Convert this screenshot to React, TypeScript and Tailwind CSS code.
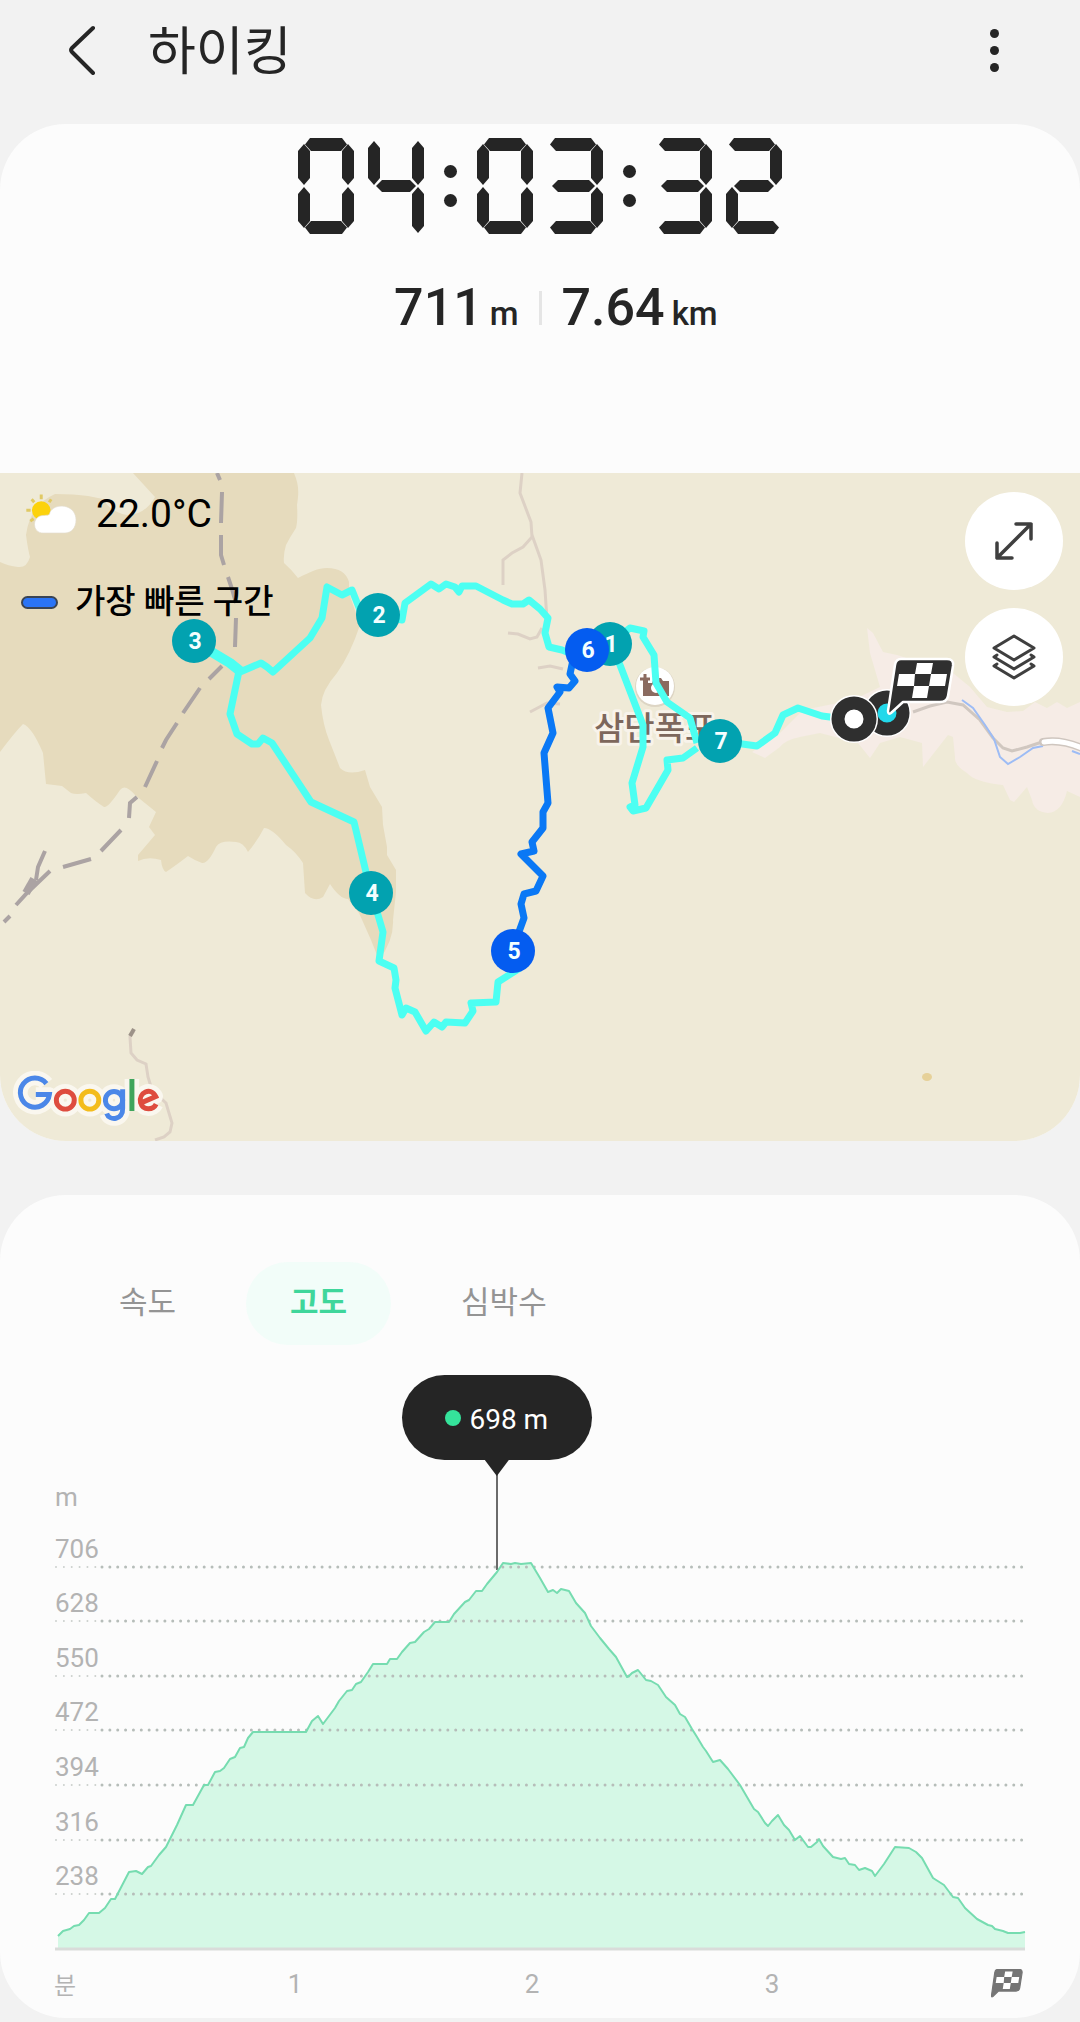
import { useState } from "react";

/* ---------- Seven-segment timer ---------- */

const H_SHAPE = "[clip-path:polygon(0_50%,6px_0,calc(100%-6px)_0,100%_50%,calc(100%-6px)_100%,6px_100%)]";
const BOTTOM_SHAPE = "[clip-path:polygon(0_50%,6px_0,calc(100%-6px)_0,100%_50%,calc(100%-5px)_100%,5px_100%)]";
const TOP_SHAPE = "[clip-path:polygon(0_50%,5px_0,calc(100%-5px)_0,100%_50%,calc(100%-6px)_100%,6px_100%)]";
const V_SHAPE = "[clip-path:polygon(50%_0,100%_7px,100%_calc(100%-7px),50%_100%,0_calc(100%-7px),0_7px)]";

const SEGMENTS: Record<string, string> = {
  a: `left-[7px] right-[7px] top-0 h-[13px] ${TOP_SHAPE}`,
  aOpen: `left-[3px] right-[7px] top-0 h-[13px] ${TOP_SHAPE}`,
  b: `right-0 top-[6px] w-[12px] h-[41px] ${V_SHAPE}`,
  bTall: `right-0 top-[3px] w-[12px] h-[44px] ${V_SHAPE}`,
  c: `right-0 top-[49px] w-[12px] h-[41px] ${V_SHAPE}`,
  cTall: `right-0 top-[49px] w-[12px] h-[46px] ${V_SHAPE}`,
  d: `left-[7px] right-[7px] bottom-0 h-[13px] ${BOTTOM_SHAPE}`,
  dOpen: `left-[3px] right-[7px] bottom-0 h-[13px] ${BOTTOM_SHAPE}`,
  dWide: `left-[7px] right-[3px] bottom-0 h-[13px] ${BOTTOM_SHAPE}`,
  e: `left-0 top-[49px] w-[12px] h-[41px] ${V_SHAPE}`,
  f: `left-0 top-[6px] w-[12px] h-[41px] ${V_SHAPE}`,
  fTall: `left-0 top-[3px] w-[12px] h-[44px] ${V_SHAPE}`,
  g: `left-[8px] right-[8px] top-[42px] h-[12px] ${H_SHAPE}`,
  gOpen: `left-[5px] right-[8px] top-[42px] h-[12px] ${H_SHAPE}`,
};

const DIGITS: Record<string, string[]> = {
  "0": ["a", "b", "c", "d", "e", "f"],
  "2": ["aOpen", "b", "g", "e", "dWide"],
  "3": ["aOpen", "b", "gOpen", "c", "dOpen"],
  "4": ["fTall", "bTall", "g", "cTall"],
};

function Digit({ value }: { value: string }) {
  return (
    <span className="relative block h-24 w-14">
      {DIGITS[value].map((name) => (
        <span key={name} className={`absolute bg-[#252525] ${SEGMENTS[name]}`} />
      ))}
    </span>
  );
}

function Colon() {
  return (
    <span className="mx-5 flex flex-col gap-4">
      <span className="size-[13px] rounded-full bg-[#252525]" />
      <span className="size-[13px] rounded-full bg-[#252525]" />
    </span>
  );
}

function Timer({ value }: { value: string }) {
  return (
    <div className="flex items-center justify-center" role="timer" aria-label={value}>
      {value.split(":").map((pair, i) => (
        <div key={i} className="flex items-center">
          {i > 0 && <Colon />}
          <div className="flex gap-[14px]">
            <Digit value={pair[0]} />
            <Digit value={pair[1]} />
          </div>
        </div>
      ))}
    </div>
  );
}

/* ---------- Flag ---------- */

function Flag({ fill, outline }: { fill: string; outline: string }) {
  return (
    <g>
      <path
        d="M14 1H60Q67 1 66 8L61 38Q60 44 53 44H16L4 55Q1 57 1 53L8 7Q9 1 14 1Z"
        fill={fill}
        stroke={outline}
        strokeWidth="2.5"
        strokeLinejoin="round"
      />
      <path
        d="M30 5H46L44 16H60L58 28H42L40 40H25L27 28H10L12 16H28ZM28 16L27 28H42L44 16Z"
        fill="#fff"
        fillRule="evenodd"
      />
    </g>
  );
}

/* ---------- Map ---------- */

const MARKERS = [
  { n: 1, x: 610, y: 644, fast: false },
  { n: 2, x: 378, y: 615, fast: false },
  { n: 3, x: 194, y: 641, fast: false },
  { n: 4, x: 371, y: 893, fast: false },
  { n: 5, x: 513, y: 951, fast: true },
  { n: 6, x: 587, y: 650, fast: true },
  { n: 7, x: 720, y: 741, fast: false },
];

function TrailMap() {
  return (
    <svg
      className="absolute inset-0 size-full"
      viewBox="0 473 1080 668"
      preserveAspectRatio="xMidYMid slice"
      role="img"
      aria-label="하이킹 경로 지도"
    >
      <rect x="-500" y="0" width="2080" height="2000" fill="#efead7" />
      <path
        d="M0 473H294C299 485 299 492 297 505Q298 520 296 528Q290 537 286 545Q283 555 284 563Q292 570 298 578C310 572 318 568 327 568Q345 568 349 582V593L360 625Q350 655 337 673Q322 690 321 705Q323 725 329 740Q335 755 340 768Q348 776 365 770L370 787L382 807L383 825L387 847V855L396 870V892L393 920Q394 940 379 960L371 940L359 913L348 899Q340 899 330 884L323 897Q314 903 305 893L303 863Q296 852 286 845Q272 828 264 828Q258 840 248 852Q243 842 236 842Q220 840 216 847Q208 864 202 863Q194 860 188 856Q175 866 166 872Q162 870 161 860Q148 856 138 861V855L155 835L149 827L156 812L135 795Q125 783 120 790Q108 808 104 807Q96 802 86 793Q76 795 71 793L62 786L46 784L43 753Q32 727 23 724Q15 732 0 752Z"
        fill="#e6dbbd"
      />
      <path d="M0 473H133L155 497Q145 515 127 515Q110 512 103 499L88 496Q75 494 55 494Q30 505 26 535Q28 550 30 557Q27 568 18 567Q8 566 0 562Z" fill="#efead7" />
      <path
        d="M867 628L873 633L883 652L897 655L953 673L970 687L987 707L1007 712L1023 711L1035 702L1047 708L1057 702L1067 708L1080 702V797L1067 791Q1062 812 1048 813Q1034 812 1032 800L1027 787L1014 802L1010 800L1003 785Q975 782 967 773Q954 765 955 757L953 737L948 735L923 767L922 743L900 737L880 743L870 758L858 743L820 733L800 737Q785 740 780 747L765 758L752 752L780 733L803 710L853 700L880 687L870 653Z"
        fill="#f6ece6"
      />
      <ellipse cx="927" cy="1077" rx="5" ry="4" fill="#e6d199" />

      <g fill="none" stroke="#aba3a3" strokeWidth="4">
        <path d="M217 473L220 480M222 492L221 523M221 535V555L224 565M228 577L232 589L236 603M236 618L235 647M222 666L209 679M200 688L183 713M177 723L166 740L162 748M157 761L145 787M137 797L130 803L129 818M121 830L101 851M91 859L63 867M50 871L27 893L16 905M45 851L38 867L36 880M10 916L4 922" />
        <path d="M34 879L26 893" strokeWidth="8" />
      </g>
      <g fill="none" stroke="#ddd1c5" strokeWidth="3">
        <path d="M134 1031L130 1037L131 1053L137 1060L146 1064L148 1077L152 1090L166 1103L172 1123L170 1132L164 1137L155 1140" />
        <path d="M522 473L520 493L531 522L532 537L523 547L512 553L503 560V585M532 535L541 560L545 590L547 620M508 633L518 634L530 639L537 637L542 628M538 668L550 666L563 669M530 712L547 703L560 704" />
      </g>
      <path d="M134 1029L130 1036" stroke="#9c9288" strokeWidth="4" />
      <path d="M913 712L930 706L947 702L963 705L980 720L993 738L1003 748L1012 751L1027 747L1042 742" fill="none" stroke="#d0c7c0" strokeWidth="3" />
      <path d="M962 700L973 708L985 725L994 739L1000 757L1008 764L1020 757L1033 748L1043 746M1072 751L1080 754" fill="none" stroke="#9dbcf5" strokeWidth="2" />
      <path d="M1043 742Q1062 739 1084 749" fill="none" stroke="#cfc6bf" strokeWidth="8" strokeLinecap="round" />
      <path d="M1044 742Q1062 739 1084 749" fill="none" stroke="#fff" strokeWidth="5" strokeLinecap="round" />

      <circle cx="655" cy="687" r="20" fill="#ddd5c4" />
      <circle cx="655" cy="686" r="19" fill="#fff" />
      <path d="M643 680H648V683H652L654 678H661L663 681H669V696H643ZM656 683A5 5 0 1 0 656 693A5 5 0 1 0 656 683Z" fill="#8b6b60" fillRule="evenodd" />
      <path d="M645 674V683M640 679H650" stroke="#8b6b60" strokeWidth="3" />
      <text
        x="594"
        y="740"
        fontSize="33"
        className="font-medium"
        fill="#7d675c"
        stroke="#f8f3ea"
        strokeWidth="6"
        strokeLinejoin="round"
        paintOrder="stroke"
      >
        삼단폭포
      </text>

      <g fill="none" stroke="#4cfff2" strokeWidth="7" strokeLinejoin="round">
        <path d="M853 719L830 717L822 716L798 708L783 715L775 733L757 746L720 741" />
        <path d="M697 743L690 718L667 702L656 683L654 655L643 637L644 631L630 628L610 644L620 665L643 725L643 747L632 783L635 805L630 807L633 811L646 808L668 770L667 760L683 758L697 748" />
        <path d="M587 660L562 650L549 647L545 633L548 618L540 609L529 600L523 604H512L503 600L476 586H462L459 592L455 587L446 584L439 589L431 584L405 603L402 620L378 615L360 610L352 590L342 595L327 587L322 618L310 638L273 672L267 667L261 663L240 672" />
        <path d="M240 671L230 663L200 645" strokeWidth="10" />
        <path d="M239 671L230 714L237 734L252 744H258L263 738L272 743L311 802L354 822L371 893L378 915L383 932L379 961L394 968L396 980L395 988L402 1015L406 1008L415 1012L426 1031L434 1022L442 1027L446 1022L465 1023L473 1011L471 1003L496 1002L498 982L520 968" />
      </g>
      <path
        d="M516 940L524 918L521 904L524 894L536 891L543 876L521 854L534 851L532 842L543 828L543 812L548 803L544 753L553 733L548 708L560 692L557 687L569 688L575 681L570 674L573 660"
        fill="none"
        stroke="#0a78f5"
        strokeWidth="7"
        strokeLinejoin="round"
      />

      {MARKERS.map((m) => (
        <g key={m.n}>
          <circle cx={m.x} cy={m.y} r="22" fill={m.fast ? "#045cf0" : "#02a2b0"} />
          <text x={m.x + 1} y={m.y + 8} fontSize="23" className="font-bold" textAnchor="middle" fill="#f4feff">
            {m.n}
          </text>
        </g>
      ))}

      <circle cx="887" cy="713" r="24" fill="#fff" />
      <circle cx="887" cy="713" r="16" fill="#22d8ea" stroke="#2f2f2f" strokeWidth="13" />
      <circle cx="854" cy="719" r="24" fill="#fff" />
      <circle cx="854" cy="719" r="16" fill="#fff" stroke="#2f2f2f" strokeWidth="13" />
      <g transform="translate(887 658)">
        <Flag fill="#2f2f2f" outline="#fff" />
      </g>
    </svg>
  );
}

function WeatherIcon() {
  return (
    <svg className="h-[42px] w-[53px]" viewBox="75 100 160 125" aria-hidden="true">
      <path d="M124 104V118M95 118L103 127M154 118L148 127M79 151H92M91 184L101 177" stroke="#e0c964" strokeWidth="9" />
      <circle cx="124" cy="152" r="28" fill="#fcd20c" />
      <path
        d="M130 220C95 220 95 168 130 167C142 166 146 166 149 163C155 128 228 128 229 180C229 205 215 220 195 220Z"
        fill="#fff"
        stroke="#e2dccd"
        strokeWidth="2"
      />
    </svg>
  );
}

function GoogleLogo() {
  const shapes = (
    <>
      <path d="M140 70A44 44 0 1 0 149 103H108" className="stroke-[#4b87e8]" />
      <circle cx="197" cy="120" r="27" className="stroke-[#de4c3e]" />
      <circle cx="271" cy="120" r="27" className="stroke-[#f3bc1c]" />
      <circle cx="344" cy="120" r="26" className="stroke-[#4b87e8]" />
      <path d="M370 87V145C372 180 330 184 322 160" className="stroke-[#4b87e8]" />
      <path d="M398 56V153" className="stroke-[#3fa55c]" />
      <path d="M424 129L470 109C455 78 417 98 424 127C432 154 463 149 471 132" className="stroke-[#de4c3e]" />
    </>
  );
  return (
    <svg className="h-[57px] w-[153px]" viewBox="40 32 460 172" fill="none" aria-hidden="true">
      <g strokeWidth="44" strokeLinejoin="round" className="[&>*]:stroke-[#faf7ef]">
        {shapes}
      </g>
      <g strokeWidth="15">{shapes}</g>
    </svg>
  );
}

/* ---------- Elevation chart ---------- */

const PROFILE =
  "58,1936 63,1931 70,1929 74,1926 79,1925 84,1920 89,1913 99,1913 105,1908 111,1899 115,1899 129,1872 136,1871 142,1874 148,1867 151,1866 159,1855 166,1847 177,1825 186,1805 193,1805 204,1785 208,1785 215,1772 220,1771 224,1768 230,1759 235,1757 240,1748 244,1747 248,1738 253,1732 306,1732 312,1721 318,1716 323,1724 329,1716 335,1708 339,1701 347,1691 352,1690 356,1684 361,1682 368,1672 373,1664 387,1664 390,1659 397,1659 402,1652 410,1643 415,1642 424,1632 429,1629 435,1622 449,1622 454,1614 465,1602 469,1600 476,1591 482,1591 487,1584 497,1572 503,1563 511,1564 515,1563 521,1564 531,1563 540,1578 548,1592 553,1590 557,1593 561,1589 569,1591 576,1603 585,1613 591,1626 600,1638 609,1649 616,1657 627,1677 629,1676 632,1673 638,1670 646,1680 651,1681 658,1685 666,1697 675,1705 680,1714 685,1717 692,1729 697,1737 703,1747 706,1751 713,1762 720,1760 728,1769 740,1785 747,1797 754,1809 758,1812 765,1823 768,1826 772,1821 778,1815 784,1825 789,1830 795,1840 800,1836 808,1847 811,1847 817,1842 819,1839 823,1846 833,1857 841,1859 845,1858 849,1864 855,1865 859,1870 865,1868 872,1871 875,1876 884,1864 895,1847 909,1848 916,1852 922,1858 933,1878 944,1885 953,1897 958,1898 965,1908 977,1919 988,1925 992,1926 995,1929 1003,1931 1008,1933 1020,1933 1025,1932";

const LEVELS = [
  { label: "706", y: 1567 },
  { label: "628", y: 1621 },
  { label: "550", y: 1676 },
  { label: "472", y: 1730 },
  { label: "394", y: 1785 },
  { label: "316", y: 1840 },
  { label: "238", y: 1894 },
];

function ElevationChart() {
  return (
    <svg className="block h-auto w-full" viewBox="0 1345 1080 673" role="img" aria-label="고도 그래프">
      <polygon points={`58,1949 ${PROFILE} 1025,1949`} fill="#d5f8e6" />
      {LEVELS.map((l) => (
        <g key={l.label} fill="none" stroke="#b6bdb9" strokeLinecap="round">
          <path d={`M56 ${l.y}H98`} strokeWidth="2" strokeDasharray="0 7.86" opacity="0.7" />
          <path d={`M102 ${l.y}H1025`} strokeWidth="3" strokeDasharray="0 7.86" />
        </g>
      ))}
      <path d="M497 1470V1570" stroke="#6b6b6b" strokeWidth="2" />
      <polyline points={PROFILE} fill="none" stroke="#76dcb0" strokeWidth="2" strokeLinejoin="round" />
      <path d="M55 1949H1025" stroke="#d9dcda" strokeWidth="3" />
      <g fontSize="26" fill="#b3b3b3">
        <text x="55" y="1506">m</text>
        {LEVELS.map((l) => (
          <text key={l.label} x="55" y={l.y - 9}>
            {l.label}
          </text>
        ))}
        <text x="54" y="1994" fontSize="24">분</text>
        <text x="295" y="1993" textAnchor="middle">1</text>
        <text x="532" y="1993" textAnchor="middle">2</text>
        <text x="772" y="1993" textAnchor="middle">3</text>
      </g>
      <svg x="991" y="1969" width="32" height="29" viewBox="0 0 68 58" preserveAspectRatio="none">
        <Flag fill="#757575" outline="#757575" />
      </svg>
    </svg>
  );
}

const TABS = ["속도", "고도", "심박수"];

export default function App() {
  const [tab, setTab] = useState("고도");
  return (
    <div className="min-h-screen bg-[#f2f2f2] pb-1 font-[Roboto,'Noto_Sans_CJK_KR',sans-serif] text-[#252525]">
      <header className="flex h-[124px] items-center pb-6 pl-[58px] pr-[62px]">
        <button type="button" aria-label="뒤로" className="flex size-12 items-center justify-center">
          <svg className="h-[50px] w-[28px]" viewBox="0 0 28 50" fill="none" stroke="currentColor" strokeWidth="4" strokeLinecap="round" strokeLinejoin="round">
            <path d="M25 3L4 23Q2 25 4 27L25 48" />
          </svg>
        </button>
        <h1 className="ml-[42px] flex-1 pt-1.5 text-[52px] leading-[60px]">하이킹</h1>
        <button type="button" aria-label="더보기" className="flex size-12 flex-col items-center justify-center gap-2">
          <span className="size-[9px] shrink-0 rounded-full bg-[#252525]" />
          <span className="size-[9px] shrink-0 rounded-full bg-[#252525]" />
          <span className="size-[9px] shrink-0 rounded-full bg-[#252525]" />
        </button>
      </header>

      <main>
        <section className="overflow-hidden rounded-[66px] bg-[#fcfcfc] pt-[14px]">
          <Timer value="04:03:32" />
          <div className="mb-[135px] mt-11 grid grid-cols-[1fr_auto_1fr] items-center gap-5 font-medium">
            <p className="flex h-[60px] items-baseline justify-end gap-[7px] text-[52px] leading-[60px]">
              711<span className="text-[33px] leading-10">m</span>
            </p>
            <span className="h-[34px] w-[3px] bg-[#e5e5e5]" />
            <p className="flex h-[60px] items-baseline gap-[7px] text-[52px] leading-[60px]">
              7.64<span className="text-[33px] leading-10">km</span>
            </p>
          </div>

          <div className="relative h-[668px]">
            <TrailMap />
            <div className="relative flex h-full justify-between pl-[21px] pr-[17px] pt-[19px]">
              <div className="text-black">
                <div className="flex h-11 items-center gap-[18px] pl-1">
                  <WeatherIcon />
                  <span className="text-[39px] leading-[46px]">22.0°C</span>
                </div>
                <div className="mt-11 flex h-11 items-center gap-[17px]">
                  <span className="h-[13px] w-[37px] rounded-full border-2 border-[#3a4454] bg-[#2a74f6]" />
                  <span className="text-[33px] font-medium leading-[44px]">가장 빠른 구간</span>
                </div>
              </div>
              <div className="flex flex-col gap-[18px]">
                <button type="button" aria-label="지도 확대" className="flex size-[98px] items-center justify-center rounded-full bg-white">
                  <svg className="size-10" viewBox="0 0 40 40" fill="none" stroke="#3f3f3f" strokeWidth="3.5" strokeLinecap="round" strokeLinejoin="round">
                    <path d="M3 37L37 3M22 3H37V18M3 22V37H18" />
                  </svg>
                </button>
                <button type="button" aria-label="지도 레이어" className="flex size-[98px] items-center justify-center rounded-full bg-white">
                  <svg className="h-[46px] w-[44px]" viewBox="0 0 44 46" fill="none" stroke="#3f3f3f" strokeWidth="3" strokeLinejoin="round" strokeLinecap="round">
                    <path d="M22 2L42 14L22 26L2 14ZM5 21L2 23L22 35L42 23L39 21M5 30L2 32L22 44L42 32L39 30" />
                  </svg>
                </button>
              </div>
            </div>
            <a href="#google" aria-label="Google" className="absolute bottom-[13px] left-[13px]">
              <GoogleLogo />
            </a>
          </div>
        </section>

        <section className="mt-[54px] overflow-hidden rounded-[66px] bg-[#fcfcfc] pt-[67px]">
          <div role="tablist" className="flex gap-[26px] pl-[75px]">
            {TABS.map((t) => (
              <button
                key={t}
                type="button"
                role="tab"
                aria-selected={t === tab}
                onClick={() => setTab(t)}
                className={
                  t === tab
                    ? "h-[83px] rounded-full bg-[#f2fdf9] px-11 text-[31px] font-bold text-[#3fd69b]"
                    : "h-[83px] rounded-full px-11 text-[31px] text-[#949494]"
                }
              >
                {t}
              </button>
            ))}
          </div>
          <div className="relative">
            <ElevationChart />
            <div className="absolute left-[46%] top-[30px] flex -translate-x-1/2 flex-col items-center">
              <div className="flex h-[85px] w-[190px] items-center justify-center gap-2 rounded-full bg-[#252525] text-[28px] text-white">
                <span className="size-4 rounded-full bg-[#35e39b]" />
                <span className="pt-1">698 m</span>
              </div>
              <span className="h-4 w-6 bg-[#252525] [clip-path:polygon(0_0,100%_0,50%_100%)]" />
            </div>
          </div>
        </section>
      </main>
    </div>
  );
}
